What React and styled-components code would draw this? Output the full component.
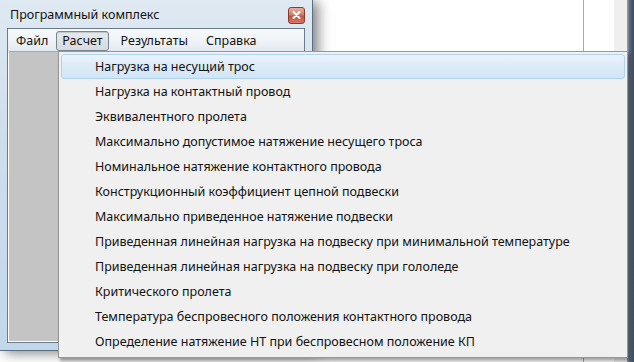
import React from 'react';
import styled, { createGlobalStyle } from 'styled-components';

const GlobalStyle = createGlobalStyle`
  html, body {
    margin: 0;
    padding: 0;
    background: #ffffff;
  }
  body {
    font-family: "Noto Sans", "Liberation Sans", sans-serif;
  }
`;

const Screen = styled.div`
  position: relative;
  width: 634px;
  height: 362px;
  overflow: hidden;
  display: flex;
  background: #ffffff;
`;

const Window = styled.div`
  width: 313px;
  height: 351px;
  flex: none;
  display: flex;
  flex-direction: column;
  box-sizing: border-box;
  padding: 0 7px 7px 7px;
  background: linear-gradient(180deg, #dfe9f2 0%, #cddeed 40%, #c3d7ea 100%);
  border-right: 1px solid #5a6f84;
  border-bottom: 1px solid #5a6f84;
  box-shadow: 5px 2px 12px rgba(0, 0, 0, 0.5);
  z-index: 1;
`;

const TitleBar = styled.div`
  height: 28px;
  display: flex;
  align-items: center;
  justify-content: space-between;
  padding-left: 3px;
  font-size: 12.5px;
  color: #111111;
`;

const CloseButton = styled.div`
  width: 17px;
  height: 17px;
  margin-top: 2px;
  box-sizing: border-box;
  border: 1px solid #8a3a2e;
  border-radius: 3px;
  background: linear-gradient(180deg, #e6aea2 0%, #d27c6a 45%, #c25440 55%, #cf7a66 100%);
  display: flex;
  align-items: center;
  justify-content: center;
`;

const Inner = styled.div`
  flex: 1;
  display: flex;
  flex-direction: column;
  border: 1px solid #6b7a8a;
  box-shadow: inset 0 0 0 1px #ffffff;
`;

const MenuBar = styled.div`
  height: 21px;
  display: flex;
  align-items: center;
  padding: 1px 0 0 2px;
  background: linear-gradient(180deg, #f7f9fb 0%, #eef2f7 60%, #e3e9f1 100%);
  font-size: 12.5px;
  color: #111111;
`;

const MenuTitle = styled.div`
  height: 20px;
  box-sizing: border-box;
  display: flex;
  align-items: center;
  padding: 0 5px;
  margin-right: ${p => p.$gap || 0}px;
  border: 1px solid ${p => (p.$open ? '#7c8794' : 'transparent')};
  border-radius: 3px;
  background: ${p => (p.$open ? 'linear-gradient(180deg, #e6e9ed 0%, #d6dbe1 100%)' : 'transparent')};
  box-shadow: ${p => (p.$open ? 'inset 0 1px 1px rgba(0,0,0,0.15)' : 'none')};
`;

const Client = styled.div`
  flex: 1;
  margin: 0 1px 1px 1px;
  background: #c4c4c4;
  border-top: 1px solid #a9a9a9;
`;

const Behind = styled.div`
  flex: 1;
  display: flex;
`;

const WhitePane = styled.div`
  flex: 1;
  background: #ffffff;
  border-right: 1px solid #a8a8a8;
`;

const SidePane = styled.div`
  width: 30px;
  background: #ffffff;
`;

const GrayStrip = styled.div`
  width: 13px;
  background: #efefef;
`;

const DarkEdge = styled.div`
  width: 7px;
  background: linear-gradient(90deg, #9aa6b4 0%, #56657a 40%, #3c4a5e 100%);
`;

const Dropdown = styled.div`
  position: absolute;
  left: 58px;
  top: 51px;
  width: 570px;
  box-sizing: border-box;
  padding: 2px 2px 3px 2px;
  background: #f0f0f0;
  border: 1px solid #979797;
  box-shadow: 2px 3px 3px rgba(0, 0, 0, 0.35);
  z-index: 5;
  display: flex;
  flex-direction: column;
`;

const Item = styled.div`
  height: 25px;
  box-sizing: border-box;
  display: flex;
  align-items: center;
  padding-left: 33px;
  font-size: 12.5px;
  color: #111111;
  border: 1px solid ${p => (p.$active ? '#aed3ee' : 'transparent')};
  border-radius: 3px;
  background: ${p =>
    p.$active ? 'linear-gradient(180deg, #eaf3fb 0%, #dcebf7 50%, #d2e6f5 100%)' : 'transparent'};
`;

const items = [
  'Нагрузка на несущий трос',
  'Нагрузка на контактный провод',
  'Эквивалентного пролета',
  'Максимально допустимое натяжение несущего троса',
  'Номинальное натяжение контактного провода',
  'Конструкционный коэффициент цепной подвески',
  'Максимально приведенное натяжение подвески',
  'Приведенная линейная нагрузка на подвеску при минимальной температуре',
  'Приведенная линейная нагрузка на подвеску при гололеде',
  'Критического пролета',
  'Температура беспровесного положения контактного провода',
  'Определение натяжение НТ при беспровесном положение КП',
];

export default function App() {
  return (
    <>
      <GlobalStyle />
      <Screen>
        <Window>
          <TitleBar>
            <span>Программный комплекс</span>
            <CloseButton>
              <svg width="9" height="8" viewBox="0 0 9 8">
                <path d="M1.5 1 L7.5 7 M7.5 1 L1.5 7" stroke="#ffffff" strokeWidth="2" strokeLinecap="round" />
              </svg>
            </CloseButton>
          </TitleBar>
          <Inner>
            <MenuBar>
              <MenuTitle $gap={2}>Файл</MenuTitle>
              <MenuTitle $open $gap={6}>Расчет</MenuTitle>
              <MenuTitle $gap={6}>Результаты</MenuTitle>
              <MenuTitle>Справка</MenuTitle>
            </MenuBar>
            <Client />
          </Inner>
        </Window>
        <Behind>
          <WhitePane />
          <SidePane />
          <GrayStrip />
          <DarkEdge />
        </Behind>
        <Dropdown>
          {items.map((text, i) => (
            <Item key={i} $active={i === 0}>{text}</Item>
          ))}
        </Dropdown>
      </Screen>
    </>
  );
}
